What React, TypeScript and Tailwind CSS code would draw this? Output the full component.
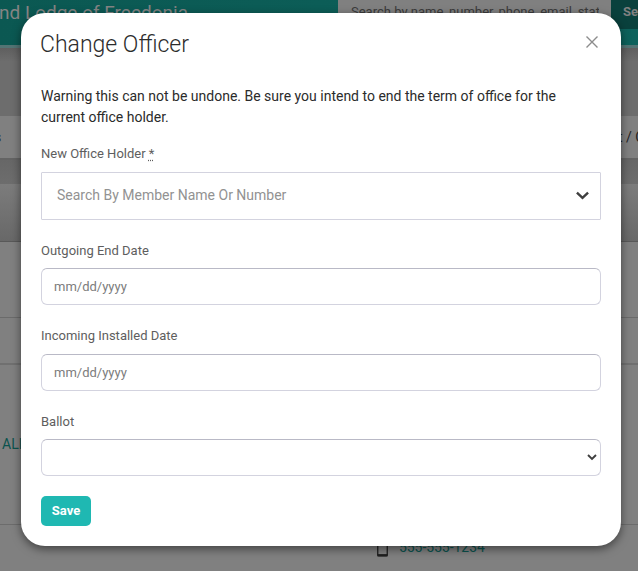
function Label({ children }: { children: React.ReactNode }) {
  return <label className="block h-5 shrink-0 text-[13px] leading-5 text-[#5e5e5e]">{children}</label>;
}

function DateField({ label, spacing }: { label: string; spacing: string }) {
  return (
    <div className="mb-[21px] shrink-0">
      <Label>{label}</Label>
      <input
        placeholder="mm/dd/yyyy"
        className={`${spacing} block h-[37px] w-full rounded-[6px] border border-[#d3d3df] border-t-[#b9b9c6] px-3 text-[13px] text-[#757575] placeholder:text-[#7c7c7c]`}
      />
    </div>
  );
}

function Backdrop() {
  return (
    <div className="flex h-full flex-col bg-[#808080] text-[#1f1f1f]">
      <header className="flex h-[48px] shrink-0 justify-between border-b-[3px] border-[#537474] bg-linear-to-r from-[#0b5852] to-[#0d625c]">
        <div className="-ml-px w-[339px] whitespace-nowrap text-[19px] leading-[26px] text-[#848484]">
          nd Lodge of Freedonia
        </div>
        <div className="flex w-[300px]">
          <div className="h-[29px] w-[273px] overflow-hidden whitespace-nowrap bg-[#808080] pr-[12px] pl-[13px] text-[13px] leading-[24px] text-[#3b3b3b]">
            <div className="overflow-hidden">Search by name, number, phone, email, status</div>
          </div>
          <div className="h-[29px] flex-1 overflow-hidden bg-[#0a413d] pl-3 text-[13px] leading-[24px] font-bold text-[#808080]">
            Sea
          </div>
        </div>
      </header>
      <div className="h-[68px] shrink-0 bg-linear-to-b from-[#5f5f5f] via-[#6d6d6d] via-20% to-[#6d6d6d]" />
      <div className="flex h-[44px] shrink-0 items-center justify-between overflow-hidden border-b-2 border-[#646464] bg-[#808080] text-[14px] whitespace-nowrap">
        <span className="-ml-[6px]">s</span>
        <span className="w-[20px]">t / C</span>
      </div>
      <div className="h-6 shrink-0 bg-linear-to-b from-[#676767] to-[#6d6d6d]" />
      <div className="h-[58px] shrink-0 border-b border-[#595959] bg-linear-to-b from-[#7c7c7c] to-[#686868]" />
      <div className="h-[76px] shrink-0 border-b border-[#6b6b6b]" />
      <div className="h-[47px] shrink-0 border-b-2 border-[#707070]" />
      <div className="flex h-[160px] shrink-0 items-center border-b border-[#6c6c6c] pl-[2px] text-[14px] text-[#0b534e]">
        ALLEN
      </div>
      <div className="flex flex-1 items-start gap-[11px] pt-[10px] pl-[377px]">
        <svg viewBox="0 0 11 18" className="mt-[4px] h-[18px] w-[11px]" fill="none" stroke="#1f1f1f">
          <rect x=".75" y=".75" width="9.5" height="16.2" rx="1" strokeWidth="1.3" />
          <path d="M.5 16.2h10" strokeWidth="2.2" />
        </svg>
        <span className="text-[13.9px] leading-[24px] text-[#0b534e]">555-555-1234</span>
      </div>
    </div>
  );
}

export default function App() {
  return (
    <div className="relative h-[571px] w-[638px] overflow-hidden font-[Roboto,sans-serif]">
      <Backdrop />
      <div
        role="dialog"
        className="absolute top-[13px] left-[21px] flex h-[533px] w-[600px] flex-col rounded-[24px] bg-white px-5 shadow-[0_3px_10px_rgba(0,0,0,0.5)]"
      >
        <div className="mt-4 mb-[25px] flex h-8 shrink-0 justify-between">
          <h1 className="-ml-px text-[23px] leading-8 font-light text-[#2c2c2c]">Change Officer</h1>
          <button aria-label="Close" className="mt-[7px] mr-[3px] h-3 w-3">
            <svg viewBox="0 0 12 12" className="h-3 w-3" fill="none" stroke="#8c8c8c" strokeWidth="1.4">
              <path d="M.5.5 11.5 11.5M11.5.5.5 11.5" />
            </svg>
          </button>
        </div>
        <p className="h-[42px] shrink-0 text-[14px] leading-[21px] text-[#2b2b2b]">
          Warning this can not be undone. Be sure you intend to end the term of office for the
          <br />
          current office holder.
        </p>
        <div className="mt-4 mb-[21px] shrink-0">
          <Label>
            New Office Holder{" "}
            <abbr title="required" className="underline decoration-dotted underline-offset-2">
              *
            </abbr>
          </Label>
          <div className="mt-2 flex h-12 items-center justify-between rounded-[1px] border border-[#d3d3df] pr-[11px] pb-px pl-[15px] text-[14px] text-[#929292]">
            <span>Search By Member Name Or Number</span>
            <svg viewBox="0 0 14 9" className="h-[9px] w-[13px]" fill="none" stroke="#3f3f3f" strokeWidth="2.6">
              <path d="m1 1.3 6 5.7 6-5.7" />
            </svg>
          </div>
        </div>
        <DateField label="Outgoing End Date" spacing="mt-[7px]" />
        <DateField label="Incoming Installed Date" spacing="mt-2" />
        <Label>Ballot</Label>
        <div className="mt-[7px] flex h-[37px] shrink-0 items-center justify-end rounded-[6px] border border-[#d3d3df] border-t-[#b9b9c6] pr-[3px]">
          <svg viewBox="0 0 10 7" className="h-[7px] w-[10px]" fill="none" stroke="#3f3f3f" strokeWidth="1.9">
            <path d="m1 1 4 4 4-4" />
          </svg>
        </div>
        <button className="mt-5 h-[30px] w-[50px] shrink-0 rounded-[5px] bg-[#1fb8b2] text-[13px] font-bold text-white">
          Save
        </button>
      </div>
    </div>
  );
}
